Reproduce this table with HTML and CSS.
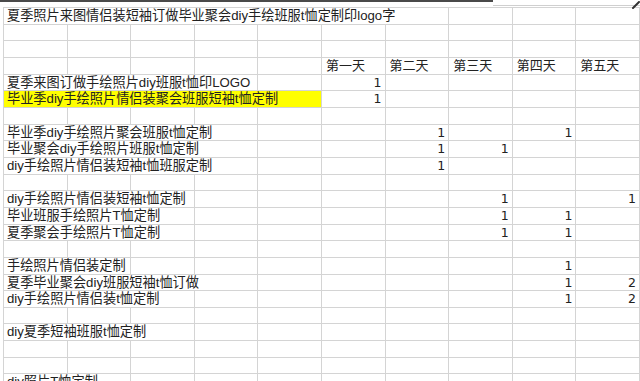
FILE: index.html
```html
<!DOCTYPE html>
<html lang="zh-CN">
<head>
<meta charset="utf-8">
<title>Sheet</title>
<link rel="stylesheet" href="styles.css">
</head>
<body>
<div class="topbar">
  <div class="dark"></div>
  <div class="light">
    <svg class="pencil" width="8" height="8" viewBox="0 0 8 8"><path d="M1 7 L7 1" stroke="#333" stroke-width="2" stroke-linecap="round"/></svg>
  </div>
</div>
<div class="sheet">
  <div class="c s7">夏季照片来图情侣装短袖订做毕业聚会diy手绘班服t恤定制印logo字</div><div class="c"></div><div class="c"></div><div class="c"></div>

  <div class="c"></div><div class="c"></div><div class="c"></div><div class="c"></div><div class="c"></div><div class="c"></div><div class="c"></div><div class="c"></div><div class="c"></div><div class="c"></div>

  <div class="c"></div><div class="c"></div><div class="c"></div><div class="c"></div><div class="c"></div><div class="c"></div><div class="c"></div><div class="c"></div><div class="c"></div><div class="c"></div>

  <div class="c"></div><div class="c"></div><div class="c"></div><div class="c"></div><div class="c"></div><div class="c hd">第一天</div><div class="c hd">第二天</div><div class="c hd">第三天</div><div class="c hd">第四天</div><div class="c hd">第五天</div>

  <div class="c s4">夏季来图订做手绘照片diy班服t恤印LOGO</div><div class="c"></div><div class="c num">1</div><div class="c"></div><div class="c"></div><div class="c"></div><div class="c"></div>

  <div class="c s5 hl">毕业季diy手绘照片情侣装聚会班服短袖t恤定制</div><div class="c num">1</div><div class="c"></div><div class="c"></div><div class="c"></div><div class="c"></div>

  <div class="c"></div><div class="c"></div><div class="c"></div><div class="c"></div><div class="c"></div><div class="c"></div><div class="c"></div><div class="c"></div><div class="c"></div><div class="c"></div>

  <div class="c s4">毕业季diy手绘照片聚会班服t恤定制</div><div class="c"></div><div class="c"></div><div class="c num">1</div><div class="c"></div><div class="c num">1</div><div class="c"></div>

  <div class="c s4">毕业聚会diy手绘照片班服t恤定制</div><div class="c"></div><div class="c"></div><div class="c num">1</div><div class="c num">1</div><div class="c"></div><div class="c"></div>

  <div class="c s4">diy手绘照片情侣装短袖t恤班服定制</div><div class="c"></div><div class="c"></div><div class="c num">1</div><div class="c"></div><div class="c"></div><div class="c"></div>

  <div class="c"></div><div class="c"></div><div class="c"></div><div class="c"></div><div class="c"></div><div class="c"></div><div class="c"></div><div class="c"></div><div class="c"></div><div class="c"></div>

  <div class="c s3">diy手绘照片情侣装短袖t恤定制</div><div class="c"></div><div class="c"></div><div class="c"></div><div class="c"></div><div class="c num">1</div><div class="c"></div><div class="c num">1</div>

  <div class="c s3">毕业班服手绘照片T恤定制</div><div class="c"></div><div class="c"></div><div class="c"></div><div class="c"></div><div class="c num">1</div><div class="c num">1</div><div class="c"></div>

  <div class="c s3">夏季聚会手绘照片T恤定制</div><div class="c"></div><div class="c"></div><div class="c"></div><div class="c"></div><div class="c num">1</div><div class="c num">1</div><div class="c"></div>

  <div class="c"></div><div class="c"></div><div class="c"></div><div class="c"></div><div class="c"></div><div class="c"></div><div class="c"></div><div class="c"></div><div class="c"></div><div class="c"></div>

  <div class="c s2">手绘照片情侣装定制</div><div class="c"></div><div class="c"></div><div class="c"></div><div class="c"></div><div class="c"></div><div class="c"></div><div class="c num">1</div><div class="c"></div>

  <div class="c s4">夏季毕业聚会diy班服短袖t恤订做</div><div class="c"></div><div class="c"></div><div class="c"></div><div class="c"></div><div class="c num">1</div><div class="c num">2</div>

  <div class="c s3">diy手绘照片情侣装t恤定制</div><div class="c"></div><div class="c"></div><div class="c"></div><div class="c"></div><div class="c"></div><div class="c num">1</div><div class="c num">2</div>

  <div class="c"></div><div class="c"></div><div class="c"></div><div class="c"></div><div class="c"></div><div class="c"></div><div class="c"></div><div class="c"></div><div class="c"></div><div class="c"></div>

  <div class="c s3">diy夏季短袖班服t恤定制</div><div class="c"></div><div class="c"></div><div class="c"></div><div class="c"></div><div class="c"></div><div class="c"></div><div class="c"></div>

  <div class="c"></div><div class="c"></div><div class="c"></div><div class="c"></div><div class="c"></div><div class="c"></div><div class="c"></div><div class="c"></div><div class="c"></div><div class="c"></div>

  <div class="c"></div><div class="c"></div><div class="c"></div><div class="c"></div><div class="c"></div><div class="c"></div><div class="c"></div><div class="c"></div><div class="c"></div><div class="c"></div>

  <div class="c s2">diy照片T恤定制</div><div class="c"></div><div class="c"></div><div class="c"></div><div class="c"></div><div class="c"></div><div class="c"></div><div class="c"></div><div class="c"></div>
</div>
</body>
</html>
```

FILE: styles.css
```css
html, body {
  margin: 0;
  padding: 0;
  background: #ffffff;
}
body {
  width: 640px;
  height: 381px;
  overflow: hidden;
  font-family: "Liberation Sans", "Noto Sans CJK SC", sans-serif;
  font-size: 13.2px;
  color: #222222;
}
.topbar {
  height: 7px;
  display: flex;
  align-items: flex-start;
}
.topbar .dark {
  width: 493px;
  height: 2px;
  background: #4a4a4a;
}
.topbar .light {
  flex: 1;
  height: 5px;
  border-bottom: 1px solid #cfcfcf;
  display: flex;
  justify-content: flex-end;
  align-items: flex-end;
}
.pencil {
  display: block;
  margin-bottom: -4px;
}
.sheet {
  margin-left: 3px;
  border-left: 1px solid #d4d4d4;
  border-top: 1px solid #d4d4d4;
  display: grid;
  grid-template-columns: repeat(10, 63.6px);
  grid-auto-rows: 16.667px;
}
.c {
  box-sizing: border-box;
  border-right: 1px solid #d4d4d4;
  border-bottom: 1px solid #d4d4d4;
  padding: 0 3px;
  white-space: nowrap;
  overflow: hidden;
  line-height: 15.667px;
}
.s2 { grid-column: span 2; }
.s3 { grid-column: span 3; }
.s4 { grid-column: span 4; }
.s5 { grid-column: span 5; }
.s7 { grid-column: span 7; }
.hl {
  background: #ffff00;
}
.hd {
  padding-left: 4px;
  font-size: 13px;
}
.num {
  text-align: right;
  font-family: "DejaVu Sans", sans-serif;
  font-size: 12.5px;
  padding-right: 3px;
}
```
